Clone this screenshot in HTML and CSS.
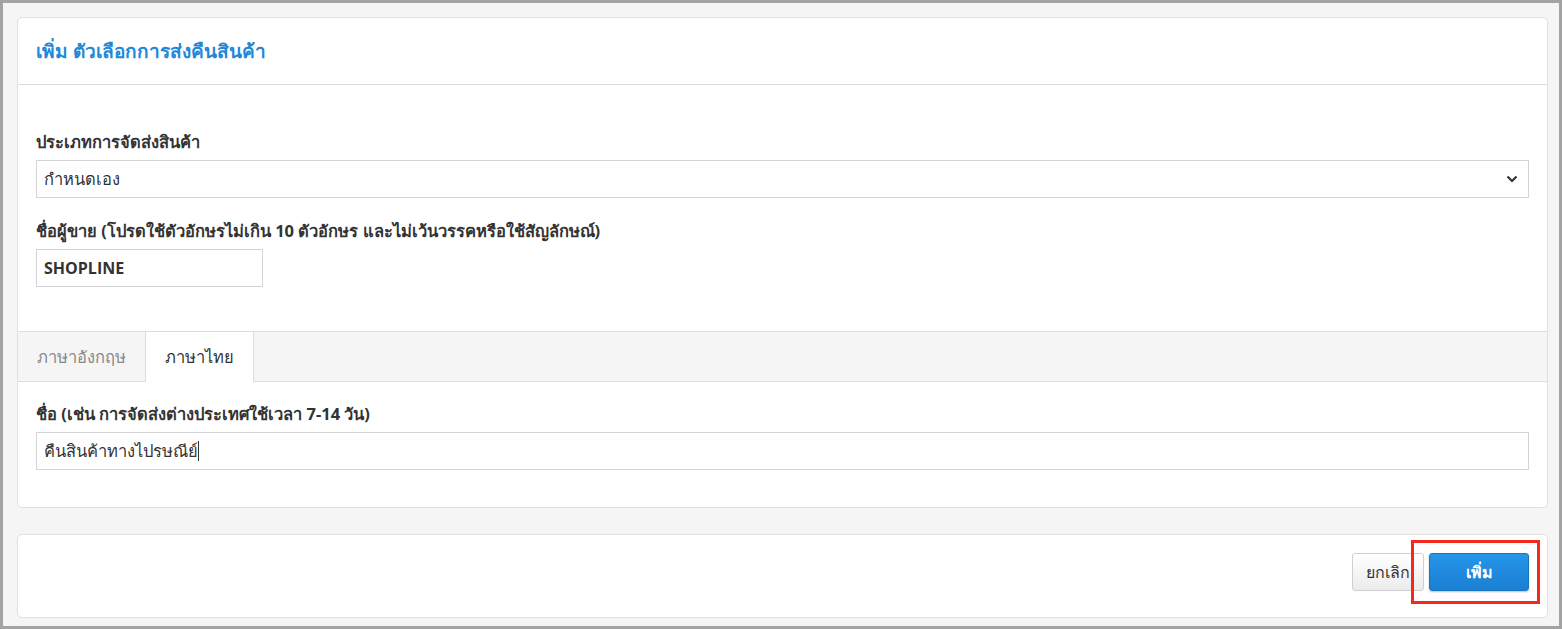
FILE: index.html
```html
<!DOCTYPE html>
<html lang="th">
<head>
  <meta charset="UTF-8" />
  <meta name="viewport" content="width=device-width, initial-scale=1.0" />
  <title>เพิ่ม ตัวเลือกการส่งคืนสินค้า</title>
  <link rel="stylesheet" href="styles.css">
</head>
<body>
  <div id="frame">
    <div class="panel">
      <div class="panel-header">
        <h3 class="panel-title">เพิ่ม ตัวเลือกการส่งคืนสินค้า</h3>
      </div>

      <div class="panel-body">
        <div class="form-group">
          <label class="control-label">ประเภทการจัดส่งสินค้า</label>
          <div class="select-box">
            <span>กำหนดเอง</span>
            <svg class="caret" width="12" height="8" viewBox="0 0 12 8">
              <path d="M1.5 1.5 L6 6 L10.5 1.5" fill="none" stroke="#333" stroke-width="2.2" />
            </svg>
          </div>
        </div>
        <div class="form-group">
          <label class="control-label">ชื่อผู้ขาย (โปรดใช้ตัวอักษรไม่เกิน 10 ตัวอักษร และไม่เว้นวรรคหรือใช้สัญลักษณ์)</label>
          <div class="text-input short strong">SHOPLINE</div>
        </div>
      </div>

      <div class="tabs">
        <div class="tab">ภาษาอังกฤษ</div>
        <div class="tab active">ภาษาไทย</div>
      </div>

      <div class="panel-body tab-body">
        <div class="form-group">
          <label class="control-label">ชื่อ (เช่น การจัดส่งต่างประเทศใช้เวลา 7-14 วัน)</label>
          <div class="text-input">คืนสินค้าทางไปรษณีย์<span class="cursor"></span></div>
        </div>
      </div>
    </div>

    <div class="panel footer">
      <button class="btn btn-default">ยกเลิก</button>
      <button class="btn btn-primary">เพิ่ม</button>
      <div class="highlight"></div>
    </div>
  </div>
</body>
</html>
```

FILE: styles.css
```css
html, body {
  margin: 0;
  height: 100%;
}
body {
  background-color: #a3a3a3;
  padding: 3px;
  box-sizing: border-box;
  font-family: 'Open Sans', 'Noto Sans', sans-serif;
  color: #333;
}
#frame {
  background-color: #f5f5f5;
  height: 100%;
  padding: 14px 11px 0 14px;
  box-sizing: border-box;
}
.panel {
  background-color: white;
  border: 1px solid #e0e0e0;
  border-radius: 5px;
}
.panel-header {
  height: 66px;
  display: flex;
  align-items: center;
  padding: 0 18px;
  border-bottom: 1px solid #dddddd;
}
.panel-title {
  margin: 0;
  font-size: 19px;
  font-weight: 600;
  color: #1f88d9;
}
.panel-body {
  padding: 47px 18px 21px;
}
.tab-body {
  padding-top: 22px;
  padding-bottom: 14px;
}
.form-group {
  margin-bottom: 23px;
}
.control-label {
  display: block;
  font-size: 16.5px;
  font-weight: 700;
  line-height: 20px;
  margin-bottom: 8px;
  white-space: nowrap;
}
.select-box, .text-input {
  height: 36px;
  border: 1px solid #d4d4d4;
  display: flex;
  align-items: center;
  padding: 0 7px;
  font-size: 16.5px;
}
.select-box {
  justify-content: space-between;
  padding-right: 10px;
}
.short {
  width: 211px;
}
.strong {
  font-weight: 700;
  font-size: 16px;
}
.cursor {
  display: inline-block;
  width: 1px;
  height: 20px;
  background-color: #333;
}
.tabs {
  display: flex;
  height: 49px;
  background-color: #f5f5f5;
  border-top: 1px solid #dddddd;
  border-bottom: 1px solid #dddddd;
}
.tab {
  padding: 0 19px;
  display: flex;
  align-items: center;
  font-size: 16.5px;
  color: #888;
}
.tab.active {
  background-color: white;
  color: #333;
  border-left: 1px solid #dddddd;
  border-right: 1px solid #dddddd;
  margin-bottom: -1px;
}
.footer {
  position: relative;
  margin-top: 26px;
  height: 84px;
  display: flex;
  justify-content: flex-end;
  align-items: flex-start;
  gap: 5px;
  padding: 18px 18px 0;
  box-sizing: border-box;
}
.btn {
  height: 38px;
  border-radius: 3px;
  font-family: inherit;
  font-size: 16px;
  padding: 0 10px;
  cursor: pointer;
}
.btn-default {
  width: 72px;
  background: linear-gradient(#ffffff, #ececec);
  border: 1px solid #cfcfcf;
  color: #333;
}
.btn-primary {
  width: 100px;
  background: linear-gradient(#2596e8, #1b7fd2);
  border: 1px solid #1a76c4;
  color: white;
  font-weight: 700;
  box-shadow: 0 1px 2px rgba(0, 0, 0, 0.25);
}
.highlight {
  position: absolute;
  left: 1393px;
  top: 5px;
  width: 123px;
  height: 58px;
  border: 3px solid #f2291c;
}
```
